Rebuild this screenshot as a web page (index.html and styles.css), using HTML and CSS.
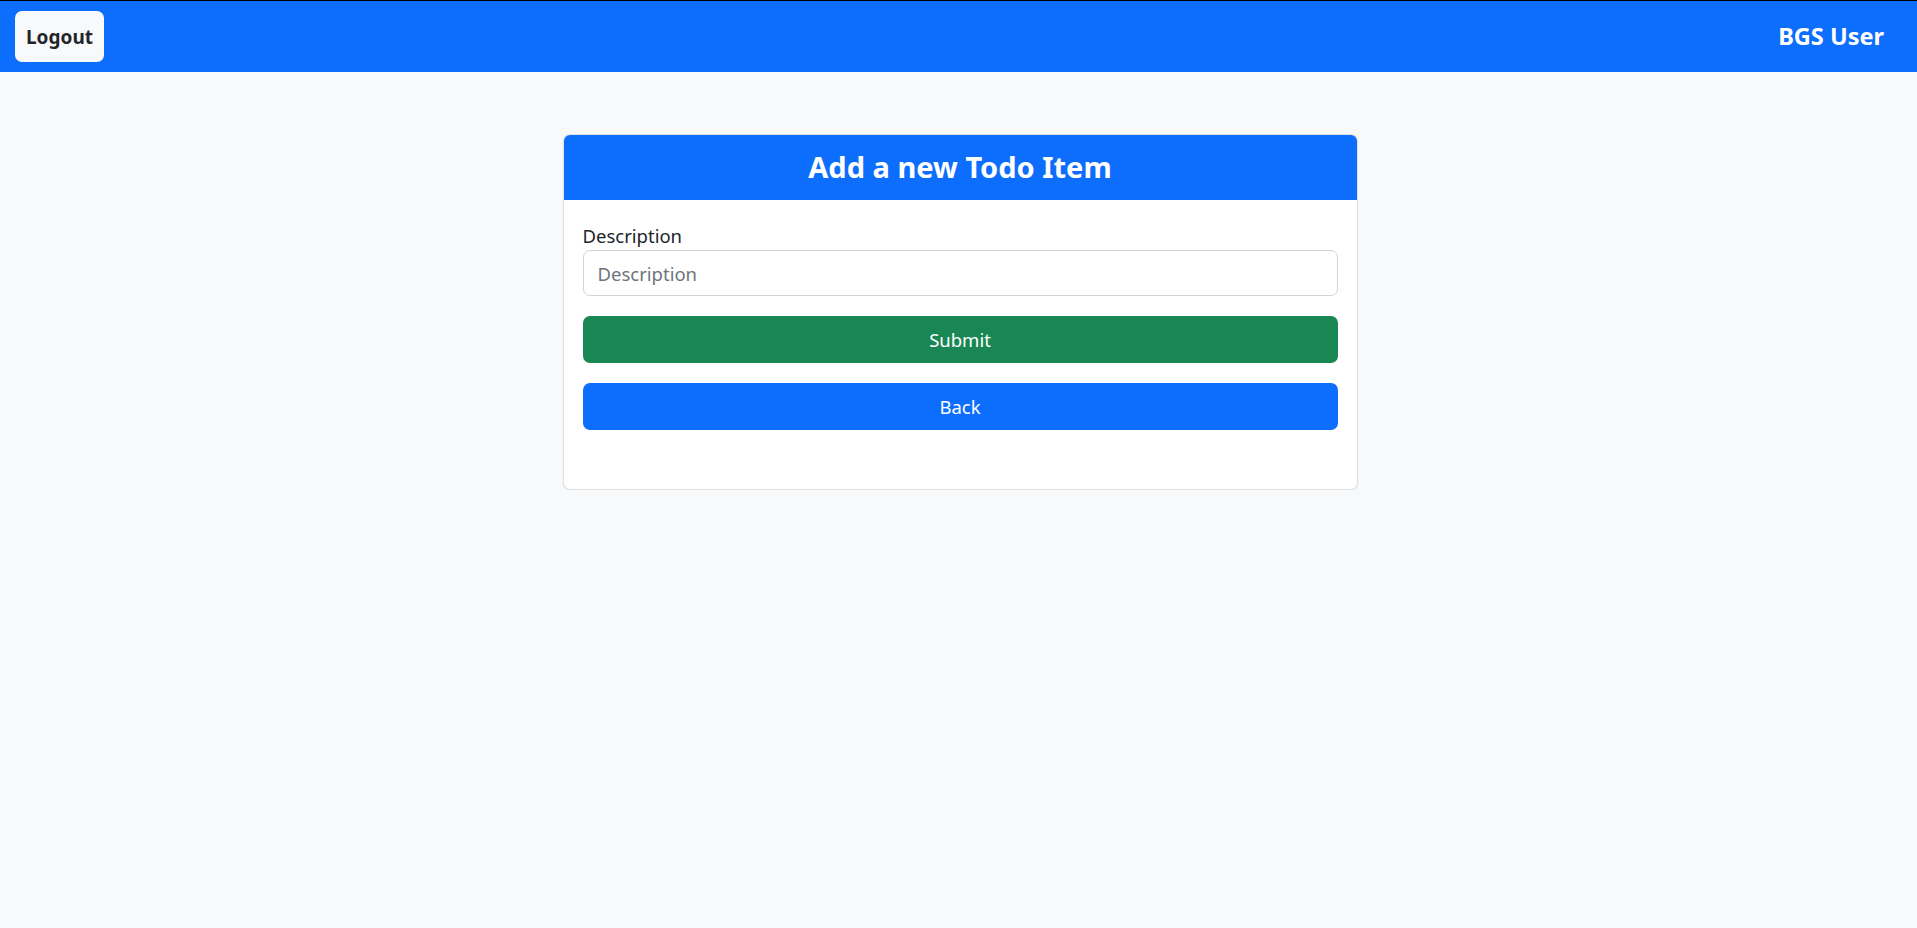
FILE: index.html
```html
<!DOCTYPE html>
<html lang="en">
<head>
<meta charset="utf-8">
<title>Add Todo</title>
<link rel="stylesheet" href="styles.css">
</head>
<body>
<nav class="navbar">
  <button class="logout-btn" type="button">Logout</button>
  <span class="user-name">BGS User</span>
</nav>
<main class="page">
  <section class="card">
    <header class="card-header">
      <h2 class="card-title">Add a new Todo Item</h2>
    </header>
    <form class="card-body">
      <label class="form-label" for="desc">Description</label>
      <input class="form-control" id="desc" type="text" placeholder="Description">
      <button class="btn btn-success" type="button">Submit</button>
      <button class="btn btn-primary" type="button">Back</button>
    </form>
  </section>
</main>
</body>
</html>
```
FILE: styles.css
```css
* { box-sizing: border-box; }
html, body { margin: 0; padding: 0; }
body {
  background: #f8f9fa;
  font-family: "Noto Sans", "Open Sans", sans-serif;
  color: #212529;
  font-size: 19.2px;
}
.navbar {
  height: 72px;
  border-top: 1px solid #000;
  background: #0d6efd;
  display: flex;
  align-items: flex-start;
  justify-content: space-between;
  padding: 10px 33px 0 15px;
}
.logout-btn {
  width: 89px;
  height: 51px;
  border: none;
  border-radius: 7px;
  background: #f8f9fa;
  color: #212529;
  font-family: inherit;
  font-weight: 700;
  font-size: 19px;
  padding: 0;
  cursor: pointer;
}
.user-name {
  color: #fff;
  font-weight: 700;
  font-size: 23.5px;
  line-height: 51px;
}
.page {
  display: flex;
  justify-content: center;
  padding-top: 62px;
  padding-left: 3px;
}
.card {
  width: 795px;
  background: #fff;
  border: 1px solid rgba(0,0,0,.12);
  border-radius: 7px;
  box-shadow: 0 1px 2px rgba(0,0,0,.06);
  overflow: hidden;
}
.card-header {
  height: 65px;
  background: #0d6efd;
  display: flex;
  align-items: center;
  justify-content: center;
}
.card-title {
  margin: 0;
  color: #fff;
  font-size: 29px;
  font-weight: 700;
  line-height: 1.2;
}
.card-body {
  display: flex;
  flex-direction: column;
  padding: 21px 19px 59px;
}
.form-label {
  font-size: 18.5px;
  line-height: 29px;
  margin-bottom: 0;
}
.form-control {
  height: 46px;
  border: 1px solid #ced4da;
  border-radius: 7px;
  padding: 0 14px;
  font-family: inherit;
  font-size: 18.5px;
  color: #212529;
  margin-bottom: 20px;
}
.form-control::placeholder { color: #6c757d; }
.btn {
  height: 47px;
  border: none;
  border-radius: 7px;
  color: #fff;
  font-family: inherit;
  font-size: 18.5px;
  padding: 0;
  cursor: pointer;
}
.btn-success { background: #198754; margin-bottom: 20px; }
.btn-primary { background: #0d6efd; }
```
